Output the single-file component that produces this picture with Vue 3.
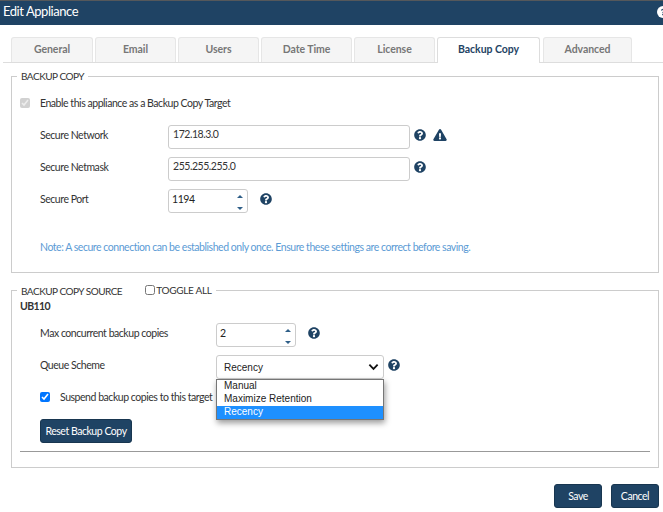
<script setup>
import { ref } from 'vue';

const tabs = ['General', 'Email', 'Users', 'Date Time', 'License', 'Backup Copy', 'Advanced'];
const activeTab = ref('Backup Copy');
const queueOptions = ['Manual', 'Maximize Retention', 'Recency'];
const queueScheme = ref('Recency');
</script>

<template>
  <div class="dialog">
    <header class="title-bar">
      <span>Edit Appliance</span>
      <svg class="title-help" viewBox="0 0 12 12"><circle cx="6" cy="6" r="6" fill="#fff" /><path d="M4 4.6c.2-1.2 1-1.8 2.1-1.8 1.2 0 2 .7 2 1.7 0 1.5-1.7 1.4-1.7 2.8H5.3c0-2 1.6-1.9 1.6-2.8 0-.4-.3-.7-.8-.7-.5 0-.8.3-.9 1zM5.2 8h1.3v1.3H5.2z" fill="#1f4364" /></svg>
    </header>

    <nav class="tabs">
      <div v-for="tab in tabs" :key="tab" class="tab" :class="{ active: tab === activeTab }">{{ tab }}</div>
    </nav>

    <fieldset class="group first">
      <legend>BACKUP COPY</legend>
      <label class="enable-row">
        <input type="checkbox" checked disabled />
        <span>Enable this appliance as a Backup Copy Target</span>
      </label>
      <div class="row">
        <span class="label">Secure Network</span>
        <input class="text-input wide" value="172.18.3.0" />
        <svg class="help" viewBox="0 0 512 512"><path d="M504 256c0 137-111 248-248 248S8 393 8 256 119 8 256 8s248 111 248 248zM263 90c-54 0-89 23-116 63-4 5-3 12 3 16l35 26c5 4 13 3 17-2 18-23 30-36 58-36 21 0 46 13 46 33 0 15-12 23-33 34-23 14-55 31-55 73v7c0 7 5 12 12 12h56c7 0 12-5 12-12v-1c0-29 85-30 85-109 0-59-61-104-120-104zm-7 254c-26 0-47 21-47 47s21 47 47 47 47-21 47-47-21-47-47-47z" /></svg>
        <svg class="warn" viewBox="0 0 576 512"><path d="M569 440c18 32-5 72-42 72H49c-37 0-60-40-42-72L247 24c18-32 65-32 83 0l239 416zM288 354c-25 0-46 21-46 46s21 46 46 46 46-21 46-46-21-46-46-46zm-44-165 7 136c0 6 6 11 12 11h50c6 0 12-5 12-11l7-136c0-7-5-13-12-13h-64c-7 0-12 6-12 13z" /></svg>
      </div>
      <div class="row">
        <span class="label">Secure Netmask</span>
        <input class="text-input wide" value="255.255.255.0" />
        <svg class="help" viewBox="0 0 512 512"><path d="M504 256c0 137-111 248-248 248S8 393 8 256 119 8 256 8s248 111 248 248zM263 90c-54 0-89 23-116 63-4 5-3 12 3 16l35 26c5 4 13 3 17-2 18-23 30-36 58-36 21 0 46 13 46 33 0 15-12 23-33 34-23 14-55 31-55 73v7c0 7 5 12 12 12h56c7 0 12-5 12-12v-1c0-29 85-30 85-109 0-59-61-104-120-104zm-7 254c-26 0-47 21-47 47s21 47 47 47 47-21 47-47-21-47-47-47z" /></svg>
      </div>
      <div class="row">
        <span class="label">Secure Port</span>
        <div class="spinner">
          <span>1194</span>
          <div class="arrows"><i class="up"></i><i class="down"></i></div>
        </div>
        <svg class="help port-help" viewBox="0 0 512 512"><path d="M504 256c0 137-111 248-248 248S8 393 8 256 119 8 256 8s248 111 248 248zM263 90c-54 0-89 23-116 63-4 5-3 12 3 16l35 26c5 4 13 3 17-2 18-23 30-36 58-36 21 0 46 13 46 33 0 15-12 23-33 34-23 14-55 31-55 73v7c0 7 5 12 12 12h56c7 0 12-5 12-12v-1c0-29 85-30 85-109 0-59-61-104-120-104zm-7 254c-26 0-47 21-47 47s21 47 47 47 47-21 47-47-21-47-47-47z" /></svg>
      </div>
      <p class="note">Note: A secure connection can be established only once. Ensure these settings are correct before saving.</p>
    </fieldset>

    <fieldset class="group second">
      <legend>
        BACKUP COPY SOURCE
        <label class="toggle-all"><input type="checkbox" />TOGGLE ALL</label>
      </legend>
      <div class="device">UB110</div>
      <div class="row source-row">
        <span class="label source-label">Max concurrent backup copies</span>
        <div class="spinner">
          <span>2</span>
          <div class="arrows"><i class="up"></i><i class="down"></i></div>
        </div>
        <svg class="help port-help" viewBox="0 0 512 512"><path d="M504 256c0 137-111 248-248 248S8 393 8 256 119 8 256 8s248 111 248 248zM263 90c-54 0-89 23-116 63-4 5-3 12 3 16l35 26c5 4 13 3 17-2 18-23 30-36 58-36 21 0 46 13 46 33 0 15-12 23-33 34-23 14-55 31-55 73v7c0 7 5 12 12 12h56c7 0 12-5 12-12v-1c0-29 85-30 85-109 0-59-61-104-120-104zm-7 254c-26 0-47 21-47 47s21 47 47 47 47-21 47-47-21-47-47-47z" /></svg>
      </div>
      <div class="row source-row queue-row">
        <span class="label source-label">Queue Scheme</span>
        <div class="select-wrap">
          <div class="select-box">
            <span>{{ queueScheme }}</span>
            <svg viewBox="0 0 12 8"><path d="M1.5 1.5 6 6l4.5-4.5" fill="none" stroke="#111" stroke-width="2" /></svg>
          </div>
          <ul class="select-list">
            <li v-for="opt in queueOptions" :key="opt" :class="{ selected: opt === queueScheme }">{{ opt }}</li>
          </ul>
        </div>
        <svg class="help select-help" viewBox="0 0 512 512"><path d="M504 256c0 137-111 248-248 248S8 393 8 256 119 8 256 8s248 111 248 248zM263 90c-54 0-89 23-116 63-4 5-3 12 3 16l35 26c5 4 13 3 17-2 18-23 30-36 58-36 21 0 46 13 46 33 0 15-12 23-33 34-23 14-55 31-55 73v7c0 7 5 12 12 12h56c7 0 12-5 12-12v-1c0-29 85-30 85-109 0-59-61-104-120-104zm-7 254c-26 0-47 21-47 47s21 47 47 47 47-21 47-47-21-47-47-47z" /></svg>
      </div>
      <label class="suspend-row">
        <input type="checkbox" checked />
        <span>Suspend backup copies to this target</span>
      </label>
      <button class="btn reset">Reset Backup Copy</button>
      <hr class="divider" />
    </fieldset>

    <footer class="actions">
      <button class="btn action">Save</button>
      <button class="btn action">Cancel</button>
    </footer>
  </div>
</template>

<style scoped>
.dialog {
  width: 663px;
  height: 512px;
  overflow: hidden;
  background: #fff;
  color: #333;
  font-family: Lato, "Liberation Sans", sans-serif;
  font-size: 10.5px;
  letter-spacing: -0.46px;
}
.title-bar {
  height: 24px;
  box-sizing: content-box;
  border-top: 1px solid #55585b;
  background: #1f4364;
  color: #fff;
  font-size: 13px;
  letter-spacing: -0.45px;
  display: flex;
  justify-content: space-between;
  align-items: center;
  padding-left: 3px;
}
.title-bar span {
  margin-top: -5px;
}
.title-help {
  width: 12px;
  height: 12px;
  margin-right: -6px;
  margin-top: -3px;
}
.tabs {
  display: flex;
  gap: 2px;
  margin: 12px 0 0 3px;
  padding-left: 8px;
  height: 25px;
  border-bottom: 1px solid #ddd;
}
.tab {
  width: 81px;
  height: 25px;
  box-sizing: border-box;
  background: #f5f5f5;
  border: 1px solid #e6e6e6;
  border-bottom: none;
  border-radius: 3px 3px 0 0;
  color: #777;
  font-size: 10.5px;
  font-weight: 700;
  letter-spacing: -0.05px;
  text-align: center;
  line-height: 23px;
}
.tab:nth-child(1) { width: 82px; }
.tab:nth-child(4) { width: 91px; }
.tab:nth-child(6) { width: 103px; }
.tab:nth-child(7) { width: 89px; margin-left: 1px; }
.tab.active {
  height: 26px;
  background: #fff;
  border-color: #ddd;
  color: #1f4364;
}
.group {
  margin: 0 0 0 11px;
  width: 648px;
  box-sizing: border-box;
  border: 1px solid #ccc;
  padding: 0;
  min-width: 0;
}
.group legend {
  margin-left: 5px;
  padding: 0 4px;
  font-size: 10px;
  letter-spacing: -0.5px;
  color: #333;
  line-height: 14px;
  height: 14px;
}
.first {
  margin-top: 6px;
  height: 204px;
}
.second {
  margin-top: 10px;
  height: 185px;
}
.enable-row {
  display: flex;
  align-items: center;
  height: 14px;
  margin: 13px 0 0 8px;
  gap: 10px;
}
.enable-row input {
  width: 10px;
  height: 10px;
  margin: 0;
}
.row {
  display: flex;
  align-items: center;
  height: 24px;
  margin-top: 8px;
  margin-left: 28px;
}
.enable-row + .row {
  margin-top: 15px;
}
.label {
  width: 128px;
  margin-top: -5px;
}
.source-label {
  width: 176px;
}
.text-input {
  box-sizing: border-box;
  height: 24px;
  border: 1px solid #ccc;
  border-radius: 3px;
  padding: 0 4px 7px;
  font-family: inherit;
  font-size: 10.5px;
  letter-spacing: -0.46px;
  color: #333;
  outline: none;
}
.wide {
  width: 242px;
}
.help {
  width: 12px;
  height: 12px;
  fill: #1f4364;
  margin-left: 4px;
  margin-top: -5px;
}
.port-help {
  margin-left: 12px;
}
.select-help {
  margin-left: 4px;
  margin-top: -4px;
}
.warn {
  width: 14px;
  height: 12px;
  fill: #1f4364;
  margin-left: 7px;
  margin-top: -5px;
}
.spinner {
  box-sizing: border-box;
  width: 80px;
  height: 24px;
  border: 1px solid #ccc;
  border-radius: 3px;
  display: flex;
  justify-content: space-between;
  padding: 3px 0 0 3px;
  color: #222;
}
.arrows {
  width: 14px;
  display: flex;
  flex-direction: column;
  align-items: center;
  gap: 9px;
  padding-top: 2px;
}
.arrows i {
  display: block;
  border-left: 3px solid transparent;
  border-right: 3px solid transparent;
}
.arrows .up {
  border-bottom: 3px solid #2f5f88;
}
.arrows .down {
  border-top: 3px solid #2f5f88;
}
.note {
  margin: 27px 0 0 28px;
  color: #5b9bd5;
  line-height: 14px;
}
.device {
  margin: 2px 0 0 8px;
  font-weight: 700;
  font-size: 10.5px;
  line-height: 14px;
  letter-spacing: -0.6px;
}
.group legend .toggle-all {
  display: inline-flex;
  align-items: center;
  margin-left: 21px;
  letter-spacing: -0.3px;
}
.toggle-all input {
  width: 10px;
  height: 10px;
  margin: 0 1px 0 0;
}
.source-row {
  margin-top: 9px;
}
.queue-row {
  margin-top: 8px;
}
.device + .source-row {
  margin-top: 10px;
}
.select-wrap {
  position: relative;
  width: 168px;
}
.select-box {
  box-sizing: border-box;
  height: 24px;
  border: 1px solid #ccc;
  border-radius: 3px;
  display: flex;
  align-items: center;
  justify-content: space-between;
  padding: 0 4px 0 7px;
  font-family: "Liberation Sans", sans-serif;
  font-size: 10px;
  letter-spacing: 0;
  color: #222;
}
.select-box svg {
  width: 11px;
  height: 8px;
}
.select-list {
  position: absolute;
  z-index: 2;
  top: 24px;
  left: 0;
  width: 168px;
  box-sizing: border-box;
  margin: 0;
  padding: 0;
  list-style: none;
  background: #fff;
  border: 1px solid #767676;
  box-shadow: 1px 3px 6px rgba(0, 0, 0, 0.4);
  font-family: "Liberation Sans", sans-serif;
  font-size: 10px;
  letter-spacing: 0;
  color: #222;
}
.select-list li {
  height: 13px;
  line-height: 12px;
  padding-left: 7px;
}
.select-list li.selected {
  background: #1e90ff;
  color: #fff;
}
.suspend-row {
  display: flex;
  align-items: center;
  gap: 10px;
  height: 14px;
  margin: 11px 0 0 28px;
}
.suspend-row input {
  width: 10px;
  height: 10px;
  margin: 0;
}
.btn {
  box-sizing: border-box;
  height: 24px;
  background: #1f4364;
  border: 1px solid #183650;
  border-radius: 3px;
  color: #fff;
  font-family: inherit;
  font-size: 10.5px;
  letter-spacing: -0.46px;
  padding: 0;
}
.reset {
  display: block;
  width: 92px;
  margin: 15px 0 0 28px;
}
.divider {
  margin: 8px 8px 0;
  border: none;
  border-top: 1px solid #999;
}
.actions {
  display: flex;
  justify-content: flex-end;
  gap: 9px;
  margin-top: 16px;
  padding-right: 4px;
}
.action {
  width: 48px;
}
</style>
